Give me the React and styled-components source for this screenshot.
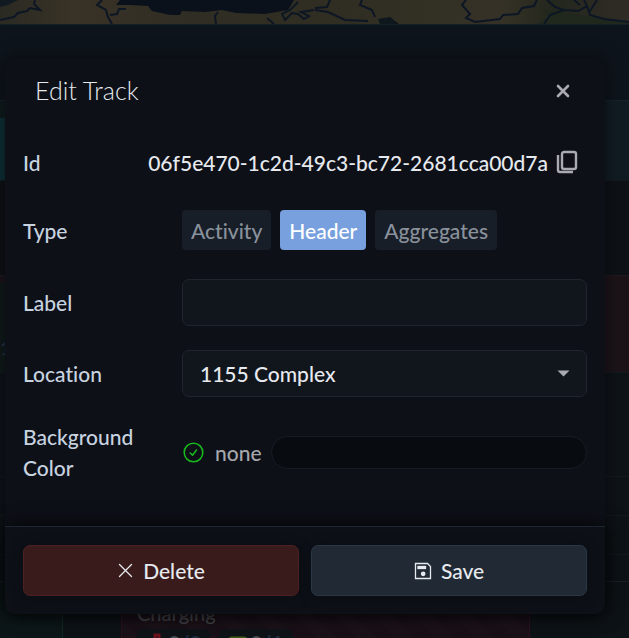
import React, { useState } from 'react';
import styled, { createGlobalStyle } from 'styled-components';

const GlobalStyle = createGlobalStyle`
  * {
    box-sizing: border-box;
  }

  body {
    margin: 0;
    background-color: #0e1318;
    color: #e6e9ee;
    font-family: Lato, "Liberation Sans", sans-serif;
    font-size: 21px;
    font-weight: 500;
    font-variant-ligatures: none;
    line-height: 31px;
  }

  button, input, select {
    font: inherit;
    color: inherit;
  }
`;

const Page = styled.div`
  position: relative;
  height: 100vh;
  overflow: hidden;
`;

const Map = styled.svg`
  display: block;
  width: 100%;
  height: 24px;
`;

const Toolbar = styled.div`
  height: 76px;
  background-color: #0e141b;
  border-top: 1px solid #131f29;
`;

const Lane = styled.div`
  display: flex;
  justify-content: space-between;
  height: ${props => props.$height}px;
  border-top: 1px solid ${props => props.$line || '#121a20'};
`;

const LaneStart = styled.div`
  width: 60px;
  background-color: ${props => props.$color};
  color: #26364b;
  font-size: 18px;
  padding-top: ${props => props.$inset || 0}px;
  border-top: ${props => props.$line ? `${props.$band}px solid ${props.$line}` : 'none'};
`;

const LaneEnd = styled.div`
  width: 60px;
  background-color: ${props => props.$color};
`;

const Cards = styled.div`
  display: flex;
  gap: 58px;
  border-top: 1px solid #17222b;
`;

const Zone = styled.div`
  width: 63px;
  height: 80px;
  background-color: #0d1719;
  border-right: 1px solid #0e2a24;
`;

const ChargingCard = styled.div`
  width: 409px;
  height: 80px;
  padding: 16px 15px;
  color: #46474d;
  font-size: 20px;
  background: repeating-linear-gradient(45deg, #1a1118 0 14px, #1c131a 14px 28px);
  border: 1px solid #30101f;
  border-top: none;
`;

const Chips = styled.div`
  display: flex;
  gap: 8px;
`;

const Chip = styled.div`
  display: flex;
  align-items: center;
  justify-content: space-between;
  width: 74px;
  height: 28px;
  padding: 0 10px;
  font-weight: 700;
  color: #4a4d52;
  background-color: #0e1418;
  border-radius: 6px;

  span {
    color: #202e41;
  }
`;

const Overlay = styled.div`
  position: absolute;
  inset: 0;
  padding: 58px 24px 24px 5px;
`;

const Dialog = styled.form`
  background-color: #0d1017;
  border-radius: 9px;
  box-shadow: 0 0 18px rgba(0, 0, 0, 0.5);
`;

const Header = styled.div`
  display: flex;
  align-items: center;
  justify-content: space-between;
  padding: 17px 30px 19px;
`;

const Title = styled.h2`
  margin: 0;
  font-size: 25px;
  font-weight: 300;
`;

const IconButton = styled.button`
  display: flex;
  align-items: center;
  justify-content: center;
  width: 24px;
  height: 24px;
  padding: 0;
  border: none;
  background: none;
  color: #a9abb0;
  cursor: pointer;
`;

const Body = styled.div`
  display: flex;
  flex-direction: column;
  gap: 24px;
  padding: 18px 18px 43px;
`;

const Row = styled.div`
  display: grid;
  grid-template-columns: 147px 1fr;
  column-gap: 12px;
  align-items: center;
  min-height: 38px;
`;

const IdRow = styled.div`
  display: flex;
  align-items: center;
  justify-content: space-between;
  min-height: 38px;
  padding-right: 8px;
`;

const IdValue = styled.div`
  display: flex;
  align-items: center;
  gap: 7px;
`;

const Label = styled.label`
  color: #c8d3e0;
`;

const Choices = styled.div`
  display: flex;
  gap: 9px;
  padding: 5px 0;
`;

const Choice = styled.button`
  height: 40px;
  padding: 0 9px;
  border: none;
  border-radius: 4px;
  background-color: ${props => props.$active ? '#789fde' : '#181e27'};
  color: ${props => props.$active ? '#ffffff' : '#89919c'};
  cursor: pointer;
`;

const TextInput = styled.input`
  width: 100%;
  height: 47px;
  padding: 0 17px;
  border: 1px solid #1f242d;
  border-radius: 7px;
  background-color: #11151c;
`;

const SelectBox = styled.div`
  display: grid;
  align-items: center;

  > * {
    grid-area: 1 / 1;
  }

  svg {
    justify-self: end;
    margin-right: 17px;
    pointer-events: none;
  }
`;

const Select = styled.select`
  appearance: none;
  width: 100%;
  height: 47px;
  padding: 0 17px;
  border: 1px solid #1f242d;
  border-radius: 7px;
  background-color: #11151c;
`;

const ColorField = styled.div`
  display: flex;
  align-items: center;
  gap: 9px;
  color: #a5a7ab;

  svg {
    margin: 0 2px 0 1px;
  }
`;

const ColorBar = styled.button`
  flex: 1;
  height: 33px;
  border: 1px solid #171c26;
  border-radius: 17px;
  background-color: #080b0f;
`;

const Footer = styled.div`
  display: grid;
  grid-template-columns: 1fr 1fr;
  gap: 12px;
  padding: 18px;
  border-top: 1px solid #1c2532;
  border-radius: 0 0 9px 9px;
  background-color: #0d1017;
  box-shadow: 0 0 20px rgba(0, 0, 0, 0.8);
`;

const Action = styled.button`
  display: flex;
  align-items: center;
  justify-content: center;
  gap: 9px;
  height: 51px;
  border: 1px solid ${props => props.$danger ? '#4d2023' : '#2a3747'};
  border-radius: 7px;
  background-color: ${props => props.$danger ? '#3a1b1b' : '#202934'};
  box-shadow: 0 2px 12px rgba(10, 14, 16, 0.8);
  cursor: pointer;
`;

const types = ['Activity', 'Header', 'Aggregates'];

function MapStrip() {
  return (
    <Map viewBox="0 0 629 24" preserveAspectRatio="none" aria-hidden="true">
      <defs>
        <linearGradient id="land">
          <stop offset="0" stopColor="#2a2a23" />
          <stop offset="0.12" stopColor="#393226" />
          <stop offset="0.3" stopColor="#302d24" />
          <stop offset="0.55" stopColor="#302e22" />
          <stop offset="0.8" stopColor="#353126" />
          <stop offset="0.88" stopColor="#23271d" />
          <stop offset="1" stopColor="#302c25" />
        </linearGradient>
      </defs>
      <rect width="629" height="24" fill="url(#land)" />
      <path d="M0 0H18L8 5 0 7Z" fill="#111a20" />
      <path d="M120 0H294L288 10 265 14 236 13 222 10 205 12 182 11 180 15 170 15 152 11 148 6 130 5 116 5Z" fill="#0a111b" />
      <path d="M378 19L390 17 399 24H380Z" fill="#0d171c" />
      <path d="M541 9L629 22V24H536L550 17Z" fill="#20271c" />
      <g fill="none" stroke="#0d1624" strokeWidth="2">
        <path d="M0 20L14 17 18 13 27 11 30 8 40 10 34 4 35 0" />
        <path d="M102 0L97 5 106 10 108 17 112 24M110 15L117 14 119 9 126 9" />
        <path d="M216 24L215 16 218 12" />
        <path d="M298 2L290 10 282 14 285 20 292 13 298 14 304 19 309 16 301 12 314 10M267 18L274 24" />
        <path d="M315 8L327 7 330 0M315 10L328 12 345 20 368 21M362 0L360 5 372 10 375 17" />
        <path d="M466 0L462 5 470 14 466 18 475 22 500 19 503 15 518 14 522 8 534 6 537 0" />
        <path d="M547 0L555 7 564 10 550 15 544 24M564 10L578 11 587 6 584 0M587 6L590 15 604 19 629 22M590 11L597 0M574 0L580 5" />
      </g>
    </Map>
  );
}

function App() {
  const [type, setType] = useState('Header');
  const [label, setLabel] = useState('');

  return (
    <Page>
      <GlobalStyle />
      <MapStrip />
      <Toolbar />
      <Lane $height={80} $line="#13242a">
        <LaneStart $color="#0d2f36" $line="#101b1c" $band={17} />
        <LaneEnd $color="#111c22" />
      </Lane>
      <Lane $height={95}>
        <LaneStart $color="#0e1114" />
        <LaneEnd $color="#0e1217" />
      </Lane>
      <Lane $height={97} $line="#20191f">
        <LaneStart $color="#101a19" $line="#1a141b" $band={7} $inset={50}>1</LaneStart>
        <LaneEnd $color="#1b1318" />
      </Lane>
      <Lane $height={104} />
      <Lane $height={39} />
      <Lane $height={39} />
      <Lane $height={27} />
      <Cards>
        <Zone />
        <ChargingCard>
          Charging
          <Chips>
            <Chip>
              <svg width="20" height="20" viewBox="0 0 20 20" fill="none" stroke="#6b131c" strokeWidth="3">
                <path d="M8 7V2H12V7L18 17H2Z" />
              </svg>
              <div>0<span>/2</span></div>
            </Chip>
            <Chip>
              <svg width="20" height="14" viewBox="0 0 20 14" fill="none" stroke="#3f5c17" strokeWidth="3">
                <rect x="1" y="2" width="16" height="11" rx="2" />
                <path d="M19 5V9" />
              </svg>
              <div>0<span>/1</span></div>
            </Chip>
          </Chips>
        </ChargingCard>
      </Cards>

      <Overlay>
        <Dialog role="dialog" aria-labelledby="title" onSubmit={e => e.preventDefault()}>
          <Header>
            <Title id="title">Edit Track</Title>
            <IconButton type="button" aria-label="Close">
              <svg width="14" height="14" viewBox="0 0 14 14" stroke="currentColor" strokeWidth="2.6" strokeLinecap="round">
                <path d="M2 2L12 12M12 2L2 12" />
              </svg>
            </IconButton>
          </Header>

          <Body>
            <IdRow>
              <Label as="span">Id</Label>
              <IdValue>
                06f5e470-1c2d-49c3-bc72-2681cca00d7a
                <IconButton type="button" aria-label="Copy id">
                  <svg width="22" height="24" viewBox="0 0 22 24" fill="none" stroke="currentColor" strokeWidth="2.4">
                    <rect x="6" y="2" width="14" height="17" rx="2" />
                    <path d="M2 5V20Q2 22 4 22H17" />
                  </svg>
                </IconButton>
              </IdValue>
            </IdRow>

            <Row>
              <Label as="span" id="type">Type</Label>
              <Choices role="group" aria-labelledby="type">
                {types.map(name => (
                  <Choice
                    key={name}
                    type="button"
                    $active={name === type}
                    aria-pressed={name === type}
                    onClick={() => setType(name)}
                  >
                    {name}
                  </Choice>
                ))}
              </Choices>
            </Row>

            <Row>
              <Label htmlFor="label">Label</Label>
              <TextInput id="label" value={label} onChange={e => setLabel(e.target.value)} />
            </Row>

            <Row>
              <Label htmlFor="location">Location</Label>
              <SelectBox>
                <Select id="location">
                  <option>1155 Complex</option>
                </Select>
                <svg width="13" height="7" viewBox="0 0 13 7" fill="#a9abb0">
                  <path d="M0.5 0.5H12.5L6.5 6.5Z" />
                </svg>
              </SelectBox>
            </Row>

            <Row>
              <Label htmlFor="color">Background Color</Label>
              <ColorField>
                <svg width="21" height="21" viewBox="0 0 21 21" fill="none" stroke="#18b51c" strokeWidth="1.6" strokeLinecap="round" strokeLinejoin="round">
                  <circle cx="10.5" cy="10.5" r="9.3" />
                  <path d="M7.2 11L9.5 13.2 13.5 8" />
                </svg>
                none
                <ColorBar id="color" type="button" />
              </ColorField>
            </Row>
          </Body>

          <Footer>
            <Action type="button" $danger>
              <svg width="17" height="17" viewBox="0 0 17 17" stroke="currentColor" strokeWidth="1.3" strokeLinecap="round">
                <path d="M2.5 2.5L14.5 14.5M14.5 2.5L2.5 14.5" />
              </svg>
              Delete
            </Action>
            <Action type="submit">
              <svg width="18" height="18" viewBox="0 0 18 18" fill="none" stroke="currentColor" strokeWidth="1.3">
                <path d="M1.5 1.5H13.5L16.5 4.5V16.5H1.5Z" />
                <rect x="4" y="4.5" width="7.5" height="2" fill="currentColor" />
                <circle cx="9.2" cy="11.8" r="1.7" fill="currentColor" />
              </svg>
              Save
            </Action>
          </Footer>
        </Dialog>
      </Overlay>
    </Page>
  );
}

export default App;
